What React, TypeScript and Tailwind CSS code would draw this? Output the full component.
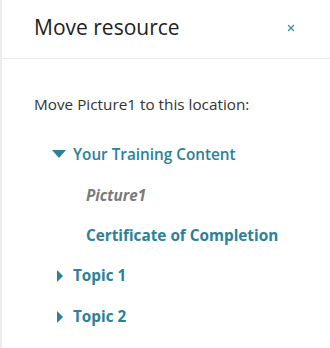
import { X } from 'lucide-react';

const teal = 'text-[#2b8197]';

function CaretDown() {
    return (
        <svg width="14" height="9" viewBox="0 0 14 9" className="flex-shrink-0">
            <path d="M0 0 H14 L7 8 Z" fill="#2b8197" />
        </svg>
    );
}

function CaretRight() {
    return (
        <svg width="6" height="12" viewBox="0 0 6 12" className="flex-shrink-0">
            <path d="M0 0 L6 6 L0 12 Z" fill="#2b8197" />
        </svg>
    );
}

export default function App() {
    return (
        <div className="w-[330px] h-[348px] bg-white border-l-2 border-[#ececec] font-['Open_Sans',sans-serif] overflow-hidden">
            {/* Header */}
            <div className="h-[59px] flex items-center justify-between pl-[32px] pr-[34px] border-b border-[#e8e8e8]">
                <h2 className="text-[21px] text-[#222] leading-none -mt-[3px]">Move resource</h2>
                <button type="button" className="text-[#3a8ea3] -mt-[2px]">
                    <X className="w-[10px] h-[10px]" strokeWidth={3} />
                </button>
            </div>

            {/* Body */}
            <div className="pl-[32px] pt-[35px]">
                <p className="text-[15.3px] text-[#333] leading-5">Move Picture1 to this location:</p>

                <div className="mt-[20px] flex flex-col">
                    <div className="h-[41px] flex items-center gap-[7px] pl-[18px]">
                        <CaretDown />
                        <span className={`text-[15.3px] font-semibold ${teal}`}>Your Training Content</span>
                    </div>
                    <div className="h-[40px] flex items-center pl-[52px]">
                        <span className="text-[15.3px] font-bold italic text-[#7a7a7a]">Picture1</span>
                    </div>
                    <div className="h-[40px] flex items-center pl-[52px]">
                        <span className={`text-[15.3px] font-bold ${teal}`}>Certificate of Completion</span>
                    </div>
                    <div className="h-[41px] flex items-center gap-[10px] pl-[23px]">
                        <CaretRight />
                        <span className={`text-[15.3px] font-bold ${teal}`}>Topic 1</span>
                    </div>
                    <div className="h-[41px] flex items-center gap-[10px] pl-[23px]">
                        <CaretRight />
                        <span className={`text-[15.3px] font-bold ${teal}`}>Topic 2</span>
                    </div>
                </div>
            </div>
        </div>
    );
}
